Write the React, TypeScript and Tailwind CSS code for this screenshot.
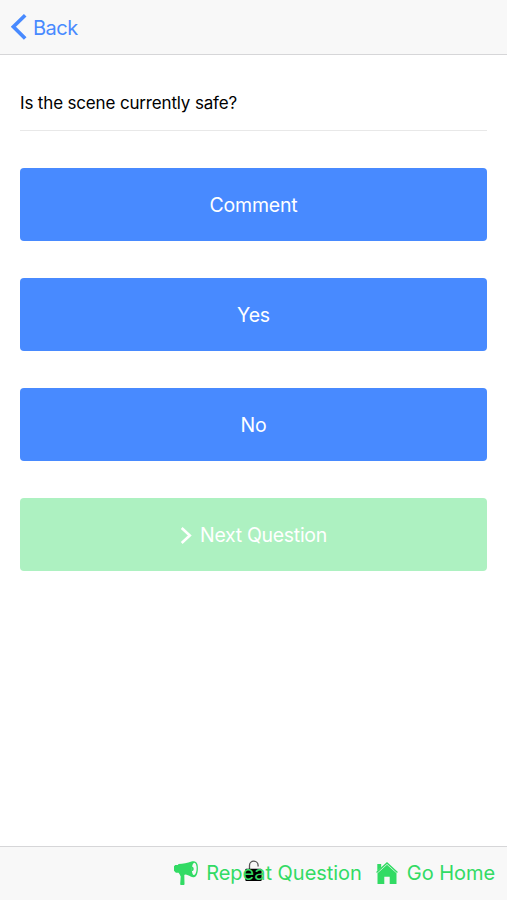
import React from 'react';

const answers = ['Comment', 'Yes', 'No'];

function BackIcon() {
  return (
    <svg className="h-[26px] w-4 shrink-0" viewBox="0 0 16 26" fill="none">
      <path d="M14.2 1.3 2.4 12.8 14.2 24.5" stroke="#488aff" strokeWidth="3.7" />
    </svg>
  );
}

function NextIcon() {
  return (
    <svg className="h-[18px] w-3 shrink-0" viewBox="0 0 12 18" fill="none">
      <path d="M1.7 1 9.8 8.500l-8.100 7.500" stroke="currentColor" strokeWidth="2.6" />
    </svg>
  );
}

function MegaphoneIcon() {
  return (
    <svg className="h-6 w-6 shrink-0" viewBox="0 0 24 24" fill="#32db64">
      <path d="M0 5.2 1.2 4h2.6l.8-1.1C9 2.9 13.5 2.2 17.5.5 19.3-.1 21 0 22.2 1.2c1.3 1.3 1.8 3.5 1.7 6.5-.1 4.2-1.2 7.5-3.3 8.3-1.3.5-2.6.2-4-.6-1.8-1-3.3-1.6-5.500-1.900l-.8.6.2 8.900c0 .6-.4 1-1 1H7.200c-.6 0-1-.4-1-1l.5-7.500-1.100-2.300-1-1.500H1.900L0 9.800Z" />
      <ellipse cx="20.2" cy="7.9" rx="2.4" ry="6.2" fill="#f8f8f8" transform="rotate(2 20.2 7.9)" />
      <path d="M17.7 5.5c1.400.1 2 1 2 2.400s-.7 2.200-2 2.200Z" />
    </svg>
  );
}

function HomeIcon() {
  return (
    <svg className="h-[22px] w-[22px] shrink-0" viewBox="0 0 22 22" fill="#32db64">
      <path d="M1.3 2h3.900v3.500L1.300 8.900Z" />
      <path d="M11 .1 21.900 9.900l-.9 1.100L11 2 1 11l-.9-1.100Z" />
      <path d="M11 2.700 20.500 11.200V22h-6.800v-7.300H8.300V22H1.500V11.200Z" />
    </svg>
  );
}

// Sits behind the label so the letters show through the body
function UnlockIcon() {
  return (
    <svg className="absolute left-[38px] top-[1px] h-[22px] w-[19px]" viewBox="0 0 19 22" fill="none">
      <path d="M5.500 9V5.500a4.300 4.300 0 0 1 8.600 0V6.500" stroke="#555" strokeWidth="1.300" />
      <rect x="1.300" y="8.700" width="16.400" height="12.300" rx="1" fill="#000" />
    </svg>
  );
}

export default function App() {
  return (
    <div className="flex h-[900px] w-full flex-col bg-white font-['Inter',sans-serif] text-black">
      <header className="flex h-[55px] shrink-0 items-center border-b border-[#d6d6d8] bg-[#f8f8f8] pl-[11px]">
        <button className="flex items-center gap-1.5 text-xl tracking-[-0.5px] text-[#488aff]">
          <BackIcon />
          <span className="pt-px">Back</span>
        </button>
      </header>

      <main className="flex-1 px-5 pt-5">
        <h1 className="flex h-[56px] items-center border-b border-[#e8e8e8] pt-0.5 text-[17px] tracking-[-0.16px]">
          Is the scene currently safe?
        </h1>
        <div className="mt-[37px] flex flex-col gap-[37px]">
          {answers.map(answer => (
            <button
              key={answer}
              className="h-[73px] w-full rounded-[4px] bg-[#488aff] pt-0.5 text-[19.5px] tracking-[-0.2px] text-white"
            >
              {answer}
            </button>
          ))}
          <button
            disabled
            className="flex h-[73px] w-full items-center justify-center gap-2 rounded-[4px] bg-[#adf1c1] pt-0.5 text-[19.5px] tracking-[-0.32px] text-white"
          >
            <NextIcon />
            Next Question
          </button>
        </div>
      </main>

      <footer className="flex h-[54px] shrink-0 items-center justify-end border-t border-[#d6d6d8] bg-[#f8f8f8] pb-0.5 pr-3 text-xl tracking-[-0.05px] text-[#32db64]">
        <button className="flex items-center gap-2">
          <MegaphoneIcon />
          <span className="relative">
            <UnlockIcon />
            <span className="relative">Repeat Question</span>
          </span>
        </button>
        <button className="ml-3.5 flex items-center gap-[9px]">
          <HomeIcon />
          Go Home
        </button>
      </footer>
    </div>
  );
}
